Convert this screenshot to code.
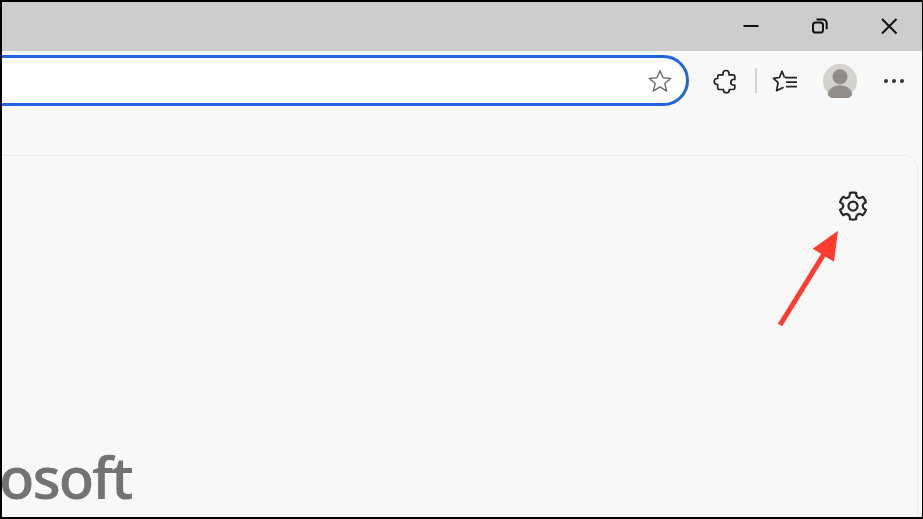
<div class="window">
	<div class="frame">
		<div class="titlebar">
			<button class="ctl" aria-label="Minimize">
				<svg width="18" height="18" viewBox="0 0 18 18"><path d="M1.500 9h15" /></svg>
			</button>
			<button class="ctl" aria-label="Restore">
				<svg width="18" height="18" viewBox="0 0 18 18">
					<rect x="2" y="5.500" width="10" height="10" rx="2.600" />
					<path d="M5.500 2.600h6.200a4 4 0 0 1 4 4v5.600" />
				</svg>
			</button>
			<button class="ctl" aria-label="Close">
				<svg width="18" height="18" viewBox="0 0 18 18"><path d="M2 2l14.500 14.500M16.500 2L2 16.500" /></svg>
			</button>
		</div>

		<div class="toolbar">
			<div class="address">
				<svg class="star" width="26" height="26" viewBox="0 0 26 26">
					<path d="M13 2.600l3 7.200 7.800.6-6 5.100 1.900 7.600L13 18.900l-6.700 4.200 1.900-7.600-6-5.100 7.800-.6z" />
				</svg>
			</div>
			<div class="tools">
				<svg class="puzzle" width="26" height="26" viewBox="0 0 26 26">
					<path d="M10 5.500c0-4 6-4 6 0v1.300h4.200c1 0 1.600.6 1.600 1.600v3.100h-1.300c-3.600 0-3.600 5.500 0 5.500h1.300v2.900c0 1-.6 1.600-1.600 1.600h-3.900v.7c0 3.400-5.800 3.400-5.800 0v-.7H6.300c-1 0-1.600-.6-1.600-1.600v-3.400H4c-3.700 0-3.700-6 0-6h.7V8.400c0-1 .6-1.600 1.600-1.600H10z" />
				</svg>
				<span class="sep"></span>
				<svg class="fav" width="28" height="26" viewBox="0 0 28 26">
					<path d="M12.500 9.500 10 3.200 7.500 9.500l-6 .9 4.600 4.300-1.500 8 6.900-3.500" />
					<path d="M13 9.700h12M14 14.200h11M14 18.700h11" />
				</svg>
				<div class="avatar" aria-label="Profile">
					<svg width="34" height="34" viewBox="0 0 34 34">
						<circle cx="17" cy="17" r="17" fill="#d3d2ce" />
						<circle cx="17" cy="12.700" r="7.500" fill="#928d89" />
						<path d="M4.700 31c.6-6.400 5.800-9.800 12.300-9.800s11.700 3.400 12.300 9.800a17 17 0 0 1-24.600 0z" fill="#928d89" />
					</svg>
				</div>
				<div class="dots" aria-label="More">
					<i></i><i></i><i></i>
				</div>
			</div>
		</div>

		<div class="content">
			<div class="card">
				<div class="card-top">
					<svg class="gear" width="36" height="36" viewBox="0 0 24 24">
						<path d="M12.012 2.250c.734.008 1.465.093 2.182.253a.75.75 0 0 1 .582.649l.17 1.527a1.384 1.384 0 0 0 1.927 1.116l1.401-.615a.75.75 0 0 1 .85.174 9.792 9.792 0 0 1 2.204 3.792.75.75 0 0 1-.271.825l-1.242.916a1.381 1.381 0 0 0 0 2.226l1.243.915a.75.75 0 0 1 .272.826 9.797 9.797 0 0 1-2.204 3.792.75.75 0 0 1-.848.175l-1.407-.617a1.380 1.380 0 0 0-1.926 1.114l-.169 1.526a.75.75 0 0 1-.572.647 9.518 9.518 0 0 1-4.406 0 .75.75 0 0 1-.572-.647l-.168-1.524a1.382 1.382 0 0 0-1.926-1.110l-1.406.616a.75.75 0 0 1-.849-.175 9.798 9.798 0 0 1-2.204-3.796.75.75 0 0 1 .272-.826l1.243-.916a1.380 1.380 0 0 0 0-2.226l-1.243-.914a.75.75 0 0 1-.271-.826 9.793 9.793 0 0 1 2.204-3.792.75.75 0 0 1 .85-.174l1.400.615a1.387 1.387 0 0 0 1.930-1.118l.17-1.526a.75.75 0 0 1 .583-.650c.717-.159 1.450-.243 2.201-.252Zm0 1.500a9.135 9.135 0 0 0-1.354.117l-.109.977A2.886 2.886 0 0 1 6.525 7.170l-.898-.394a8.293 8.293 0 0 0-1.348 2.317l.798.587a2.881 2.881 0 0 1 0 4.643l-.799.588c.32.842.776 1.626 1.348 2.322l.905-.397a2.882 2.882 0 0 1 4.017 2.318l.11.984c.889.150 1.798.150 2.687 0l.11-.984a2.881 2.881 0 0 1 4.018-2.322l.905.396a8.296 8.296 0 0 0 1.347-2.318l-.798-.588a2.881 2.881 0 0 1 0-4.643l.796-.587a8.293 8.293 0 0 0-1.348-2.317l-.896.393a2.884 2.884 0 0 1-4.023-2.324l-.11-.976a8.988 8.988 0 0 0-1.333-.117ZM12 8.250a3.750 3.750 0 1 1 0 7.500 3.750 3.750 0 0 1 0-7.500Zm0 1.500a2.250 2.250 0 1 0 0 4.500 2.250 2.250 0 0 0 0-4.500Z" />
					</svg>
				</div>
				<div class="logo"><span>Microsoft</span></div>
			</div>
		</div>
	</div>

	<!-- annotation drawn over the page -->
	<svg class="arrow" width="70" height="106" viewBox="0 0 70 106">
		<path d="M2 103 46 32" />
		<polygon points="60,8.700 34.700,26.700 56,39.700" />
	</svg>
</div>

<style>
	:global(body) {
		margin: 0;
	}

	.window {
		position: relative;
		box-sizing: border-box;
		width: 923px;
		height: 519px;
		padding: 2px 1px 2px 2px;
		background: #000;
		display: flex;
		font-family: "Open Sans", "Liberation Sans", sans-serif;
	}

	.frame {
		flex: 1;
		min-width: 0;
		background: #f8f8f8;
		overflow: hidden;
		display: flex;
		flex-direction: column;
	}

	.titlebar {
		height: 49px;
		flex: none;
		background: #cdcdcd;
		display: flex;
		justify-content: flex-end;
		align-items: center;
	}

	.ctl {
		width: 69px;
		height: 46px;
		margin: 0 0 2px;
		padding: 0;
		border: 0;
		background: none;
		display: flex;
		align-items: center;
		justify-content: center;
	}

	.ctl:last-child {
		margin-right: -1px;
	}

	.ctl svg {
		fill: none;
		stroke: #111;
		stroke-width: 2;
	}

	.toolbar {
		height: 59px;
		flex: none;
		display: flex;
		align-items: flex-start;
		padding-top: 4px;
		box-sizing: border-box;
	}

	.address {
		box-sizing: border-box;
		width: 718px;
		height: 51px;
		margin-left: -31px;
		flex: none;
		background: #fff;
		border: 3px solid #2065e0;
		border-radius: 26px;
		display: flex;
		align-items: center;
		justify-content: flex-end;
		padding-right: 13px;
	}

	.star {
		fill: none;
		stroke: #757575;
		stroke-width: 1.500;
		stroke-linejoin: round;
	}

	.tools {
		height: 51px;
		display: flex;
		align-items: center;
		margin-left: 24px;
	}

	.puzzle,
	.fav {
		fill: none;
		stroke: #222;
		stroke-width: 1.700;
		stroke-linejoin: round;
	}

	.sep {
		width: 2px;
		height: 25px;
		background: #d2d2d2;
		margin: 0 15px 0 16px;
	}

	.avatar {
		width: 34px;
		height: 34px;
		margin-left: 23px;
	}

	.dots {
		display: flex;
		gap: 4px;
		margin-left: 27px;
	}

	.dots i {
		width: 4px;
		height: 4px;
		border-radius: 50%;
		background: #333;
	}

	.content {
		flex: 1;
		min-height: 0;
		padding: 45px 4px 0 0;
	}

	.card {
		box-sizing: border-box;
		height: 100%;
		margin-left: -20px;
		border: 1px solid #ececec;
		border-bottom: 0;
		border-radius: 15px 15px 0 0;
		display: flex;
		flex-direction: column;
		justify-content: space-between;
	}

	.card-top {
		display: flex;
		justify-content: flex-end;
		padding: 32px 46px 0 0;
	}

	.gear {
		fill: #2a2a2a;
	}

	.logo {
		width: 149px;
		height: 76px;
		overflow: hidden;
		display: flex;
		justify-content: flex-end;
		color: #737373;
		font-size: 58px;
		font-weight: 600;
		line-height: 72px;
		letter-spacing: -2px;
		white-space: nowrap;
	}

	.logo span {
		flex: none;
	}

	.arrow {
		position: absolute;
		left: 778px;
		top: 222px;
		stroke: #ff3b30;
		fill: #ff3b30;
		stroke-width: 5;
	}

	.arrow polygon {
		stroke: none;
	}
</style>
